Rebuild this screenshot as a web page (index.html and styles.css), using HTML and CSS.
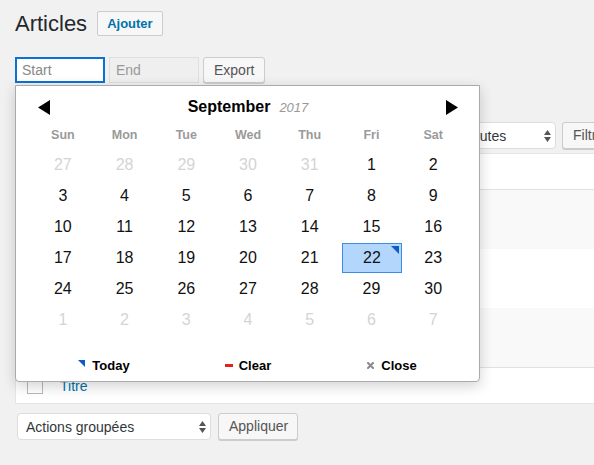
FILE: index.html
```html
<!DOCTYPE html>
<html lang="fr">
<head>
<meta charset="utf-8">
<title>Articles</title>
<link rel="stylesheet" href="styles.css">
</head>
<body>
<div class="wrap">
  <div class="heading">
    <h1 class="title">Articles</h1>
    <a class="add-btn">Ajouter</a>
  </div>

  <div class="dates">
    <input class="date-input is-focus" placeholder="Start">
    <input class="date-input is-off" placeholder="End">
    <button class="btn">Export</button>
  </div>

  <div class="tablenav">
    <div class="select sel-bulk">Actions groupées<svg class="arrows" width="7" height="12" viewBox="0 0 7 12"><path d="M3.5 0L7 5H0z M3.5 12L7 7H0z" fill="#555"/></svg></div>
    <button class="btn btn-apply">Appliquer</button>
    <div class="select sel-date">Toutes les dates<svg class="arrows" width="7" height="12" viewBox="0 0 7 12"><path d="M3.5 0L7 5H0z M3.5 12L7 7H0z" fill="#555"/></svg></div>
    <div class="select sel-cat">Toutes<svg class="arrows" width="7" height="12" viewBox="0 0 7 12"><path d="M3.5 0L7 5H0z M3.5 12L7 7H0z" fill="#555"/></svg></div>
    <button class="btn">Filtrer</button>
  </div>

  <div class="list">
    <div class="list-head"></div>
    <div class="list-row alt"></div>
    <div class="list-row"></div>
    <div class="list-row alt"></div>
    <div class="list-foot"><span class="cb"></span><a class="col-title">Titre</a></div>
  </div>

  <div class="tablenav bottom">
    <div class="select sel-bulk">Actions groupées<svg class="arrows" width="7" height="12" viewBox="0 0 7 12"><path d="M3.5 0L7 5H0z M3.5 12L7 7H0z" fill="#555"/></svg></div>
    <button class="btn btn-apply">Appliquer</button>
  </div>

  <div class="datepicker">
    <div class="dp-head">
      <svg class="dp-prev" width="12" height="15" viewBox="0 0 12 15"><path d="M0 7.5L12 0V15z" fill="#000"/></svg>
      <div class="dp-title"><span class="dp-month">September</span><span class="dp-year">2017</span></div>
      <svg class="dp-next" width="12" height="15" viewBox="0 0 12 15"><path d="M12 7.5L0 0V15z" fill="#000"/></svg>
    </div>
    <div class="dp-grid">
      <div class="dp-dow">Sun</div><div class="dp-dow">Mon</div><div class="dp-dow">Tue</div><div class="dp-dow">Wed</div><div class="dp-dow">Thu</div><div class="dp-dow">Fri</div><div class="dp-dow">Sat</div>
      <div class="dp-day muted">27</div><div class="dp-day muted">28</div><div class="dp-day muted">29</div><div class="dp-day muted">30</div><div class="dp-day muted">31</div><div class="dp-day">1</div><div class="dp-day">2</div>
      <div class="dp-day">3</div><div class="dp-day">4</div><div class="dp-day">5</div><div class="dp-day">6</div><div class="dp-day">7</div><div class="dp-day">8</div><div class="dp-day">9</div>
      <div class="dp-day">10</div><div class="dp-day">11</div><div class="dp-day">12</div><div class="dp-day">13</div><div class="dp-day">14</div><div class="dp-day">15</div><div class="dp-day">16</div>
      <div class="dp-day">17</div><div class="dp-day">18</div><div class="dp-day">19</div><div class="dp-day">20</div><div class="dp-day">21</div><div class="dp-day sel">22</div><div class="dp-day">23</div>
      <div class="dp-day">24</div><div class="dp-day">25</div><div class="dp-day">26</div><div class="dp-day">27</div><div class="dp-day">28</div><div class="dp-day">29</div><div class="dp-day">30</div>
      <div class="dp-day muted">1</div><div class="dp-day muted">2</div><div class="dp-day muted">3</div><div class="dp-day muted">4</div><div class="dp-day muted">5</div><div class="dp-day muted">6</div><div class="dp-day muted">7</div>
    </div>
    <div class="dp-foot">
      <div class="dp-action"><span class="ico-today"></span>Today</div>
      <div class="dp-action gap-clear"><span class="ico-clear"></span>Clear</div>
      <div class="dp-action"><svg class="ico-close" width="7" height="7" viewBox="0 0 7 7"><path d="M1 1L6 6M6 1L1 6" stroke="#888" stroke-width="2" stroke-linecap="round"/></svg>Close</div>
    </div>
  </div>
</div>
</body>
</html>
```

FILE: styles.css
```css
html, body {
  margin: 0;
  padding: 0;
  overflow: hidden;
  background: #f1f1f1;
}
body {
  font-family: "Liberation Sans", Arial, sans-serif;
  color: #32373c;
  width: 594px;
  height: 465px;
}
.wrap {
  position: relative;
  width: 700px;
  box-sizing: border-box;
  padding: 11px 0 0 15px;
}
.heading {
  display: flex;
  align-items: center;
  height: 25px;
}
.title {
  margin: 0;
  font-size: 22px;
  font-weight: 400;
  line-height: 25px;
  color: #23282d;
}
.add-btn {
  margin-left: 10px;
  height: 25px;
  box-sizing: border-box;
  padding: 0 9px;
  border: 1px solid #ccc;
  border-radius: 2px;
  background: #f7f7f7;
  color: #0073aa;
  font-size: 13px;
  font-weight: bold;
  line-height: 23px;
}
.dates {
  display: flex;
  gap: 4px;
  margin-top: 21px;
  height: 26px;
}
.date-input {
  width: 90px;
  height: 26px;
  box-sizing: border-box;
  margin: 0;
  padding: 0 6px;
  border: 1px solid #ddd;
  background: #fff;
  font-family: "Liberation Sans", Arial, sans-serif;
  font-size: 14px;
  outline: none;
}
.date-input::placeholder { color: #888; }
.date-input.is-focus {
  border: 2px solid #0b72d3;
  padding: 0 5px;
}
.date-input.is-off {
  background: #efefef;
  border-color: #dedede;
}
.date-input.is-off::placeholder { color: #999; }
.btn {
  height: 27px;
  box-sizing: border-box;
  margin: 0;
  padding: 0 10px;
  border: 1px solid #ccc;
  border-radius: 3px;
  background: #f7f7f7;
  box-shadow: 0 1px 0 #ccc;
  color: #555;
  font-family: "Liberation Sans", Arial, sans-serif;
  font-size: 14px;
  line-height: 25px;
}
.dates .btn { height: 26px; }
.tablenav {
  display: flex;
  align-items: center;
  gap: 6px;
  margin-top: 39px;
  height: 27px;
}
.tablenav.bottom { margin-top: 9px; }
.select {
  display: flex;
  align-items: center;
  justify-content: space-between;
  height: 27px;
  box-sizing: border-box;
  padding: 0 4px 0 8px;
  border: 1px solid #ddd;
  border-radius: 4px;
  background: #fff;
  font-size: 14px;
  color: #32373c;
  white-space: nowrap;
}
.sel-bulk { width: 194px; margin-left: 2px; }
.btn-apply { width: 80px; margin-left: 1px; }
.sel-date { width: 146px; }
.sel-cat { width: 100px; }
.arrows { flex: none; }
.list {
  margin-top: 4px;
  background: #fff;
  border: 1px solid #e5e5e5;
}
.list-head {
  height: 35px;
  border-bottom: 1px solid #e1e1e1;
}
.list-row { height: 59px; }
.list-row.alt { background: #f9f9f9; }
.list-foot {
  display: flex;
  align-items: center;
  height: 35px;
  border-top: 1px solid #e1e1e1;
}
.cb {
  width: 16px;
  height: 16px;
  box-sizing: border-box;
  margin-left: 11px;
  border: 1px solid #b4b9be;
  background: #fff;
}
.col-title {
  margin-left: 17px;
  color: #0073aa;
  font-size: 14px;
}
.datepicker {
  position: absolute;
  left: 15px;
  top: 85px;
  width: 465px;
  box-sizing: border-box;
  padding: 6px 15px 1px 16px;
  background: #fff;
  border: 1px solid #aaa;
  border-radius: 0 0 4px 4px;
  box-shadow: 0 4px 14px rgba(0, 0, 0, 0.18);
  color: #000;
}
.dp-head {
  display: grid;
  grid-template-columns: 40px 1fr 40px;
  align-items: center;
  height: 30px;
}
.dp-prev { justify-self: start; margin-left: 6px; }
.dp-next { justify-self: end; margin-right: 6px; }
.dp-title {
  text-align: center;
  white-space: nowrap;
}
.dp-month {
  font-size: 16px;
  font-weight: bold;
}
.dp-year {
  margin-left: 9px;
  font-size: 13px;
  font-style: italic;
  color: #999;
}
.dp-grid {
  display: grid;
  grid-template-columns: repeat(7, 1fr);
  row-gap: 1px;
}
.dp-dow {
  height: 27px;
  line-height: 27px;
  text-align: center;
  font-size: 12.5px;
  font-weight: bold;
  color: #9a9a9a;
}
.dp-day {
  position: relative;
  height: 30px;
  line-height: 30px;
  text-align: center;
  font-size: 16px;
  color: #111;
}
.dp-day.muted { color: #d4d4d4; }
.dp-day.sel {
  box-sizing: border-box;
  line-height: 28px;
  margin-left: 1px;
  background: #b3d7fc;
  border: 1px solid #3a8de0;
}
.dp-day.sel::after {
  content: "";
  position: absolute;
  top: 2px;
  right: 2px;
  width: 0;
  height: 0;
  border-top: 8px solid #0d5bc6;
  border-left: 8px solid transparent;
}
.dp-foot {
  display: grid;
  grid-template-columns: repeat(3, 1fr);
  margin-top: 15px;
  height: 30px;
}
.dp-action {
  display: flex;
  align-items: center;
  justify-content: center;
  gap: 7px;
  font-size: 13px;
  font-weight: bold;
  color: #000;
}
.dp-action.gap-clear { gap: 6px; }
.ico-today {
  width: 0;
  height: 0;
  border-top: 7px solid #0d5bc6;
  border-left: 7px solid transparent;
  margin-top: -3px;
}
.ico-clear {
  width: 8px;
  height: 3px;
  background: #e2231a;
}
.ico-close { flex: none; }
```
